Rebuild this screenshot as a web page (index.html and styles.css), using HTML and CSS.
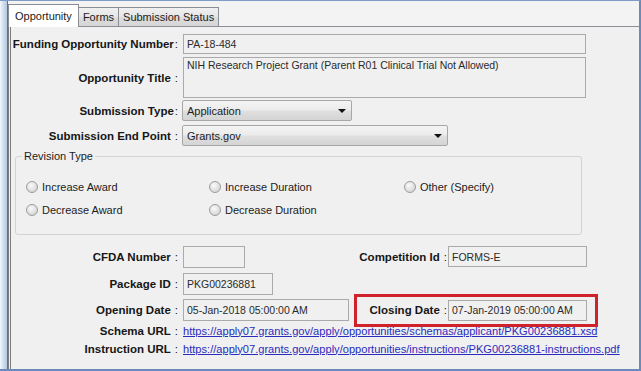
FILE: index.html
```html
<!DOCTYPE html>
<html lang="en">
<head>
    <meta charset="UTF-8">
    <title>Opportunity</title>
    <link rel="stylesheet" href="styles.css">
</head>
<body>
    <div class="window">
        <div class="frame-edge"></div>
        <div class="main">
            <div class="tabs">
                <div class="tab active">Opportunity</div>
                <div class="tab">Forms</div>
                <div class="tab">Submission Status</div>
            </div>
            <div class="panel">
                <div class="row r-number">
                    <div class="lbl">Funding Opportunity Number<span class="colon tight">:</span></div>
                    <div class="field w-wide">PA-18-484</div>
                </div>
                <div class="row r-title">
                    <div class="lbl">Opportunity Title<span class="colon">:</span></div>
                    <div class="field w-wide area">NIH Research Project Grant (Parent R01 Clinical Trial Not Allowed)</div>
                </div>
                <div class="row r-type">
                    <div class="lbl">Submission Type<span class="colon tight">:</span></div>
                    <div class="combo w-type">Application<span class="arrow"></span></div>
                </div>
                <div class="row r-end">
                    <div class="lbl">Submission End Point<span class="colon">:</span></div>
                    <div class="combo w-end">Grants.gov<span class="arrow"></span></div>
                </div>

                <fieldset class="revision">
                    <legend>Revision Type</legend>
                    <div class="radios">
                        <div class="radio"><span class="dot"></span>Increase Award</div>
                        <div class="radio"><span class="dot"></span>Increase Duration</div>
                        <div class="radio"><span class="dot"></span>Other (Specify)</div>
                        <div class="radio"><span class="dot"></span>Decrease Award</div>
                        <div class="radio"><span class="dot"></span>Decrease Duration</div>
                    </div>
                </fieldset>

                <div class="row r-cfda">
                    <div class="pair">
                        <div class="lbl">CFDA Number<span class="colon">:</span></div>
                        <div class="field tall w-cfda"></div>
                    </div>
                    <div class="group">
                        <div class="lbl">Competition Id<span class="colon">:</span></div>
                        <div class="field w-right">FORMS-E</div>
                    </div>
                </div>
                <div class="row r-package">
                    <div class="pair">
                        <div class="lbl">Package ID<span class="colon">:</span></div>
                        <div class="field tall w-package">PKG00236881</div>
                    </div>
                </div>
                <div class="row r-dates">
                    <div class="pair">
                        <div class="lbl">Opening Date<span class="colon">:</span></div>
                        <div class="field tall w-date">05-Jan-2018 05:00:00 AM</div>
                    </div>
                    <div class="group marked">
                        <div class="lbl">Closing Date<span class="colon">:</span></div>
                        <div class="field w-right">07-Jan-2019 05:00:00 AM</div>
                    </div>
                </div>
                <div class="row r-link r-schema">
                    <div class="lbl">Schema URL<span class="colon">:</span></div>
                    <a class="link" href="#">https://apply07.grants.gov/apply/opportunities/schemas/applicant/PKG00236881.xsd</a>
                </div>
                <div class="row r-link">
                    <div class="lbl">Instruction URL<span class="colon">:</span></div>
                    <a class="link" href="#">https://apply07.grants.gov/apply/opportunities/instructions/PKG00236881-instructions.pdf</a>
                </div>
            </div>
        </div>
    </div>
</body>
</html>
```

FILE: styles.css
```css
body {
    margin: 0;
    background: #f0f0f0;
    color: #1c1c1c;
    font-family: "Liberation Sans", Arial, sans-serif;
    font-size: 11px;
}
.window {
    width: 641px;
    height: 371px;
    box-sizing: border-box;
    display: flex;
    border-top: 1px solid #7d9cc6;
    border-right: 2px solid #6a8bb9;
    border-bottom: 2px solid #6a8bb9;
    overflow: hidden;
}
.frame-edge {
    width: 7px;
    flex: none;
    background: linear-gradient(to right, #f2f6fb, #cbdbee 55%, #b4c8e1);
    border-right: 1px solid #707070;
}
.main {
    flex: 1;
    display: flex;
    flex-direction: column;
    background: #f0f0f0;
}

/* tabs */
.tabs {
    height: 25px;
    display: flex;
    align-items: flex-end;
    background: #f4f3f3;
    border-bottom: 1px solid #8a8d94;
}
.tab {
    height: 18px;
    line-height: 18px;
    padding: 0 4px;
    border: 1px solid #8a8d94;
    border-bottom: none;
    margin-left: -1px;
    background: linear-gradient(#f0f0f0, #e6e6e6 50%, #dcdcdc 51%, #d6d6d6);
}
.tab.active {
    height: 22px;
    line-height: 22px;
    padding: 0 6px;
    margin-left: 0;
    margin-bottom: -1px;
    background: #fff;
    position: relative;
}

/* form panel */
.panel {
    flex: 1;
    border-left: 3px double #7c7c7c;
    padding-top: 7px;
}
.row {
    display: flex;
    align-items: center;
    gap: 5px;
}
.lbl {
    width: 167px;
    flex: none;
    display: flex;
    justify-content: flex-end;
    white-space: nowrap;
    font-weight: bold;
    font-size: 11.5px;
    color: #161616;
}
.colon {
    font-weight: normal;
    margin-left: 4px;
}
.colon.tight {
    margin-left: 1px;
}
.field {
    box-sizing: border-box;
    height: 20px;
    display: flex;
    align-items: center;
    padding: 0 3px;
    border: 1px solid #aaaaaa;
    background: #f0f0f0;
    font-size: 10.5px;
    color: #2a2a2a;
    white-space: nowrap;
}
.field.tall {
    height: 22px;
}
.field.area {
    height: 41px;
    align-items: flex-start;
    padding-top: 1px;
}
.w-wide { width: 403px; }
.w-cfda { width: 62px; }
.w-package { width: 90px; }
.w-date { width: 168px; }
.w-right { width: 139px; height: 21px; }

.combo {
    box-sizing: border-box;
    height: 21px;
    margin-left: -1px;
    display: flex;
    align-items: center;
    justify-content: space-between;
    padding: 0 4px;
    border: 1px solid #a7a7a7;
    border-radius: 2px;
    background: linear-gradient(#f4f4f4, #ececec 45%, #dfdfdf 55%, #d4d4d4);
}
.w-type { width: 170px; }
.w-end { width: 266px; }
.arrow {
    width: 0;
    height: 0;
    border-left: 4px solid transparent;
    border-right: 4px solid transparent;
    border-top: 4px solid #111;
    margin-right: 1px;
}

.r-number { margin-top: 0; }
.r-title { margin-top: 3px; }
.r-type { margin-top: 2px; }
.r-end { margin-top: 4px; }

/* revision type group */
.revision {
    box-sizing: border-box;
    width: 567px;
    margin: 4px 0 0 4px;
    padding: 0;
    border: 1px solid #d3d3d3;
    border-radius: 3px;
}
.revision legend {
    margin-left: 6px;
    padding: 0 2px;
    line-height: 13px;
}
.radios {
    display: grid;
    grid-template-columns: 183px 195px 1fr;
    row-gap: 7px;
    padding: 16px 0 16px 10px;
}
.radio {
    height: 16px;
    display: flex;
    align-items: center;
    gap: 4px;
}
.dot {
    box-sizing: border-box;
    width: 12px;
    height: 12px;
    border-radius: 50%;
    border: 1px solid #9c9c9c;
    background: radial-gradient(circle at 40% 35%, #fafafa, #dedede 60%, #cacaca);
}

/* lower block */
.pair {
    width: 338px;
    flex: none;
    display: flex;
    align-items: center;
    gap: 5px;
}
.group {
    display: flex;
    align-items: center;
    gap: 1px;
    border: 3px solid transparent;
    padding: 0 8px 0 4px;
}
.group .lbl {
    width: 86px;
}
.group.marked {
    border-color: #d0222b;
    padding: 3px 8px 3px 4px;
    margin: -6px 0;
}
.r-cfda { margin-top: 8px; }
.r-package { margin-top: 3px; }
.r-dates { margin-top: 4px; }
.r-link {
    height: 15px;
    margin-top: 3px;
}
.r-link.r-schema {
    margin-top: 2px;
}
.link {
    color: #2b2bbd;
    font-size: 11.1px;
    text-decoration: underline;
    white-space: nowrap;
}
```
